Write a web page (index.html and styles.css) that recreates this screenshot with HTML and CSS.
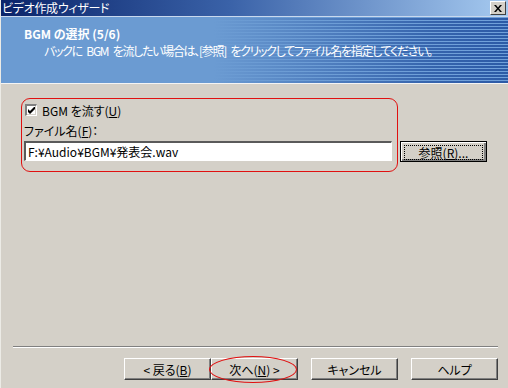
FILE: index.html
```html
<!DOCTYPE html>
<html>

<head>
  <meta charset="utf-8">
  <title>ビデオ作成ウィザード</title>
  <link rel="stylesheet" href="styles.css">
</head>

<body>

  <div class="window">

    <!-- Title bar -->
    <div class="titlebar">
      <span class="title">ビデオ作成ウィザード</span>
      <span class="close-btn">
        <svg width="8" height="7" viewBox="0 0 8 7">
          <path d="M0 0h2l2 2.5L6 0h2L5 3.5 8 7H6L4 4.5 2 7H0l3-3.5z" fill="#000"/>
        </svg>
      </span>
    </div>

    <!-- Wizard header -->
    <div class="wiz-header">
      <div class="wiz-title">BGM の選択 (5/6)</div>
      <div class="wiz-subtitle">バックに BGM を流したい場合は、[参照] をクリックしてファイル名を指定してください。</div>
    </div>

    <!-- Page content -->
    <div class="wiz-body">
      <div class="bgm-group">
        <label class="check-row">
          <span class="checkbox">
            <svg width="7" height="7" viewBox="0 0 7 7">
              <path d="M0 2v3l2 2 5-5V-1L2 4z" fill="#000"/>
            </svg>
          </span>
          <span>BGM を流す(<u>U</u>)</span>
        </label>
        <div class="file-label">ファイル名(<u>F</u>)：</div>
        <div class="file-row">
          <div class="file-input">F:¥Audio¥BGM¥発表会.wav</div>
          <button class="btn btn-default"><span class="focus-rect">参照(<u>R</u>)...</span></button>
        </div>
      </div>
    </div>

    <!-- Buttons -->
    <div class="wiz-footer">
      <div class="etched"></div>
      <div class="btn-row">
        <button class="btn">&lt; 戻る(<u>B</u>)</button>
        <button class="btn btn-next">次へ(<u>N</u>) &gt;<span class="mark"></span></button>
        <button class="btn btn-gap">キャンセル</button>
        <button class="btn btn-gap">ヘルプ</button>
      </div>
    </div>

  </div>

</body>

</html>
```

FILE: styles.css
```css
body {
  margin: 0;
  padding: 0;
  font-family: 'Noto Sans CJK JP', 'DejaVu Sans', sans-serif;
  font-size: 12px;
  font-feature-settings: "palt";
  color: #000;
}

.window {
  width: 508px;
  height: 388px;
  background-color: #d4d0c8;
  display: flex;
  flex-direction: column;
  border-left: 1px solid #ecebe6;
  box-sizing: border-box;
  overflow: hidden;
}

/* Title bar */
.titlebar {
  height: 16px;
  background: linear-gradient(to right, #0a246a 0%, #3a62a8 45%, #a6caf0 100%);
  display: flex;
  align-items: center;
  justify-content: space-between;
  padding: 0 2px 0 1px;
  border-bottom: 1px solid #c9d9ee;
}

.title {
  color: #fff;
  font-size: 12px;
  line-height: 16px;
  letter-spacing: -0.3px;
}

.close-btn {
  width: 14px;
  height: 12px;
  background-color: #d4d0c8;
  border-top: 1px solid #fff;
  border-left: 1px solid #fff;
  border-right: 1px solid #404040;
  border-bottom: 1px solid #404040;
  display: flex;
  align-items: center;
  justify-content: center;
  box-sizing: content-box;
}

/* Header with striped blue band */
.wiz-header {
  height: 67px;
  box-sizing: border-box;
  padding: 9px 0 0 23px;
  color: #fff;
  background:
    linear-gradient(to right, #6b9bd2 0%, #6b9bd2 42%, rgba(107, 155, 210, 0.6) 62%, rgba(107, 155, 210, 0.15) 85%, rgba(107, 155, 210, 0) 100%),
    repeating-linear-gradient(to bottom, #70a0da 0px, #70a0da 1px, #2c5aa6 1px, #2c5aa6 3px);
  border-bottom: 1px solid #f4f4f4;
}

.wiz-title {
  font-weight: bold;
  font-size: 12px;
  line-height: 16px;
}

.wiz-subtitle {
  margin: 1px 0 0 20px;
  font-size: 12px;
  line-height: 16px;
  letter-spacing: -1.3px;
  word-spacing: 3px;
}

/* Body */
.wiz-body {
  flex: 1;
  padding: 14px 0 0 20px;
}

.bgm-group {
  width: 377px;
  height: 74px;
  border: 1px solid #e01010;
  border-radius: 9px;
  padding: 3px 0 0 2px;
  box-sizing: border-box;
}

.check-row {
  display: flex;
  align-items: center;
  height: 16px;
  margin-left: 1px;
}

.checkbox {
  width: 9px;
  height: 9px;
  background-color: #fff;
  border-top: 2px solid #808080;
  border-left: 2px solid #808080;
  border-right: 1px solid #fff;
  border-bottom: 1px solid #fff;
  box-shadow: inset -1px -1px 0 #d4d0c8;
  display: flex;
  align-items: center;
  justify-content: center;
  margin-right: 5px;
}

.file-label {
  margin-top: 5px;
  line-height: 15px;
}

.file-row {
  display: flex;
  margin-top: 3px;
}

.file-input {
  flex: none;
  width: 368px;
  height: 20px;
  box-sizing: border-box;
  background-color: #fff;
  border-top: 2px solid #5a5a5a;
  border-left: 2px solid #5a5a5a;
  border-right: 1px solid #fff;
  border-bottom: 1px solid #fff;
  padding: 0 2px;
  line-height: 17px;
  white-space: nowrap;
}

/* Buttons */
.btn {
  flex: none;
  width: 87px;
  height: 22px;
  padding: 0;
  font-family: inherit;
  font-size: 12px;
  font-feature-settings: "palt";
  color: #000;
  background-color: #d4d0c8;
  border-top: 1px solid #fff;
  border-left: 1px solid #fff;
  border-right: 1px solid #404040;
  border-bottom: 1px solid #404040;
  box-shadow: inset -1px -1px 0 #808080;
  position: relative;
}

.btn-default {
  margin-left: 8px;
  height: 21px;
  border: 1px solid #000;
  box-shadow: inset 1px 1px 0 #fff, inset -2px -2px 0 #808080;
  padding: 3px;
}

.focus-rect {
  display: block;
  height: 13px;
  line-height: 13px;
  border: 1px dotted #000;
}

.wiz-footer {
  padding: 0 10px 8px 12px;
}

.etched {
  height: 1px;
  background-color: #808080;
  border-bottom: 1px solid #fff;
}

.btn-row {
  display: flex;
  justify-content: flex-end;
  margin-top: 10px;
}

.btn-gap {
  margin-left: 13px;
}

/* Red hand-drawn marks */
.mark {
  position: absolute;
  left: -3px;
  top: -3px;
  width: 86px;
  height: 25px;
  border: 1px solid #e01010;
  border-radius: 50%;
}
```
